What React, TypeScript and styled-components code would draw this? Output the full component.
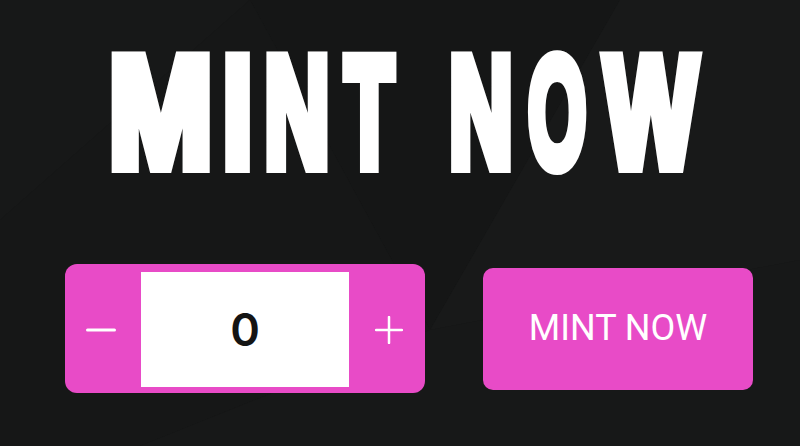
import React, { useMemo, useState } from "react";
import styled, { createGlobalStyle } from "styled-components";

const Global = createGlobalStyle`
  html, body { margin: 0; padding: 0; background: #161717; }
  * { box-sizing: border-box; }
`;

const TITLE_FONT = `700 155px "Liberation Sans", Arial, sans-serif`;
const STROKE = 14;

type Letter = { ch: string; x0: number; x1: number };

const LETTERS: Letter[] = [
  { ch: "M", x0: 111.5, x1: 210 },
  { ch: "I", x0: 225, x1: 250 },
  { ch: "N", x0: 266, x1: 327.5 },
  { ch: "T", x0: 341.5, x1: 396.5 },
  { ch: "N", x0: 450.5, x1: 510.5 },
  { ch: "O", x0: 527.5, x1: 586.5 },
  { ch: "W", x0: 600, x1: 701.5 },
];

const Page = styled.main`
  position: relative;
  width: 800px;
  height: 446px;
  overflow: hidden;
  background: #161717;
  display: flex;
  flex-direction: column;
  font-family: Inter, "Liberation Sans", sans-serif;
`;

const Backdrop = styled.svg`
  position: absolute;
  inset: 0;
  width: 100%;
  height: 100%;
  pointer-events: none;
`;

const Content = styled.div`
  position: relative;
  display: flex;
  flex-direction: column;
`;

const Title = styled.h1`
  margin: 0;
  padding-top: 35px;
  height: 190px;
  display: flex;
  align-items: flex-start;
  font: ${TITLE_FONT};
  line-height: 155px;
  color: #fff;
  -webkit-text-stroke: ${STROKE}px #fff;
  white-space: nowrap;
`;

const Cell = styled.span<{ $left: number; $width: number }>`
  flex: none;
  margin-left: ${(p) => p.$left}px;
  width: ${(p) => p.$width}px;
  height: 155px;
  display: flex;
  justify-content: center;
`;

const Glyph = styled.span`
  flex: none;
  display: inline-block;
  transform-origin: center;
`;

const Row = styled.div`
  display: flex;
  align-items: center;
  gap: 58px;
  padding-left: 65px;
  margin-top: 74px;
`;

const Stepper = styled.div`
  width: 360px;
  height: 129px;
  border-radius: 12px;
  background: #e84bc7;
  display: flex;
  align-items: flex-start;
  padding-top: 8px;
`;

const StepButton = styled.button<{ $side: "left" | "right" }>`
  width: 76px;
  height: 115px;
  border: 0;
  background: transparent;
  padding: ${(p) => (p.$side === "left" ? "0 3px 0 0" : "0 0 0 3px")};
  display: flex;
  align-items: center;
  justify-content: center;
  cursor: pointer;
  color: #fff;
`;

const Count = styled.div`
  width: 209px;
  height: 115px;
  background: #fff;
  display: flex;
  align-items: center;
  justify-content: center;
  font-family: Inter, "Liberation Sans", sans-serif;
  font-weight: 600;
  font-size: 45px;
  color: #141414;
`;

const MintButton = styled.button`
  width: 270px;
  height: 122px;
  border: 0;
  border-radius: 10px;
  background: #e84bc7;
  color: #fff;
  font-family: Roboto, "Liberation Sans", sans-serif;
  font-weight: 400;
  font-size: 36px;
  padding: 0 0 2px;
  cursor: pointer;
`;

const Icon = styled.svg`
  display: block;
`;

function useGlyphFits(letters: Letter[]) {
  return useMemo(() => {
    let ctx: CanvasRenderingContext2D | null = null;
    try {
      ctx = document.createElement("canvas").getContext("2d");
    } catch {
      ctx = null;
    }
    if (ctx) ctx.font = TITLE_FONT;
    return letters.map((l) => {
      const target = l.x1 - l.x0;
      if (!ctx) return { s: 0.6, dx: 0 };
      const m = ctx.measureText(l.ch);
      const inkLeft = -m.actualBoundingBoxLeft;
      const inkRight = m.actualBoundingBoxRight;
      const ink = inkRight - inkLeft + STROKE;
      const s = target / ink;
      const offset = (inkLeft + inkRight) / 2 - m.width / 2;
      return { s, dx: -offset * s };
    });
  }, [letters]);
}

export default function App() {
  const [count, setCount] = useState(0);
  const fits = useGlyphFits(LETTERS);
  return (
    <Page>
      <Global />
      <Backdrop viewBox="0 0 800 446" preserveAspectRatio="none">
        <polygon points="0,0 250,0 0,220" fill="#171818" />
        <polygon points="250,0 620,0 430,330" fill="#151616" />
        <polygon points="430,330 620,0 800,0 800,260" fill="#181919" />
        <polygon points="0,220 250,0 430,330 140,446 0,446" fill="#161717" />
        <polygon points="430,330 800,260 800,446 140,446" fill="#171818" />
      </Backdrop>
      <Content>
        <Title aria-label="MINT NOW">
          {LETTERS.map((l, i) => (
            <Cell key={i} $left={i === 0 ? l.x0 : l.x0 - LETTERS[i - 1].x1} $width={l.x1 - l.x0}>
              <Glyph style={{ transform: `translateX(${fits[i].dx}px) scaleX(${fits[i].s})` }}>{l.ch}</Glyph>
            </Cell>
          ))}
        </Title>
        <Row>
          <Stepper>
            <StepButton $side="left" aria-label="decrease" onClick={() => setCount(Math.max(0, count - 1))}>
              <Icon width="30" height="4" viewBox="0 0 30 4">
                <line x1="1.5" y1="2" x2="28.5" y2="2" stroke="#fff" strokeWidth="3" strokeLinecap="round" />
              </Icon>
            </StepButton>
            <Count>{count}</Count>
            <StepButton $side="right" aria-label="increase" onClick={() => setCount(count + 1)}>
              <Icon width="28" height="28" viewBox="0 0 28 28">
                <line x1="1" y1="14" x2="27" y2="14" stroke="#fff" strokeWidth="2.5" strokeLinecap="round" />
                <line x1="14" y1="1" x2="14" y2="27" stroke="#fff" strokeWidth="2.5" strokeLinecap="round" />
              </Icon>
            </StepButton>
          </Stepper>
          <MintButton>MINT NOW</MintButton>
        </Row>
      </Content>
    </Page>
  );
}
